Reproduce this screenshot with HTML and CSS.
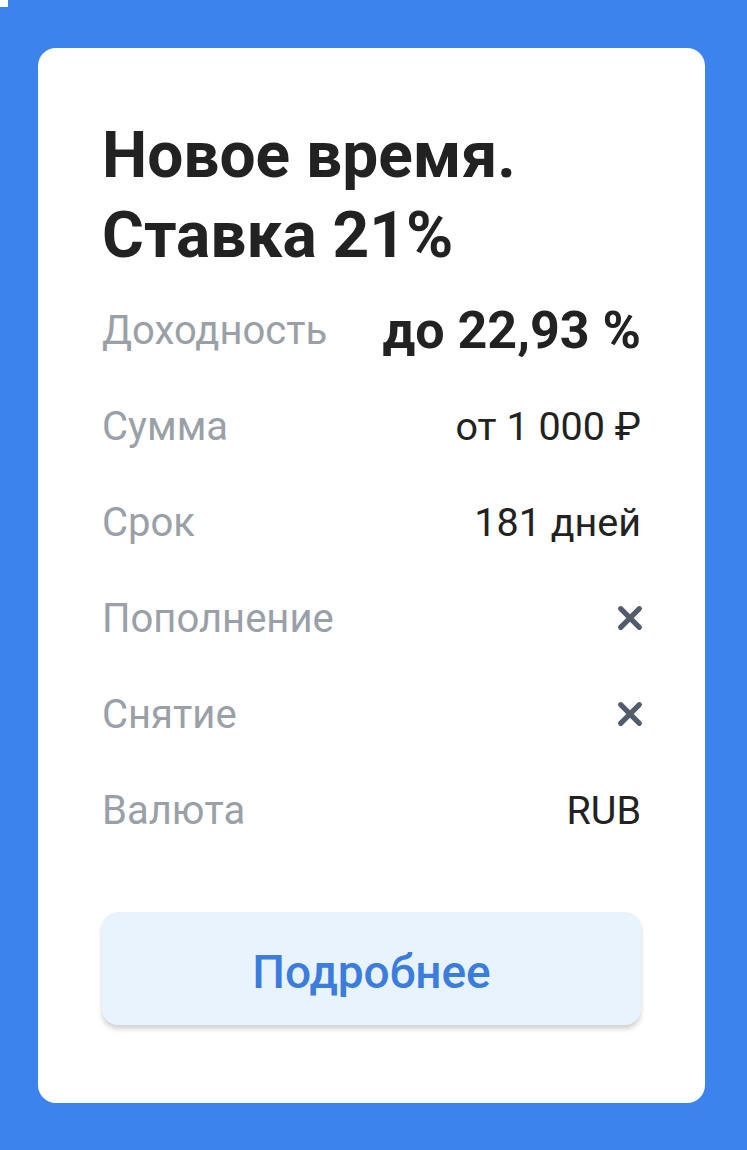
FILE: index.html
```html
<!DOCTYPE html>
<html lang="ru">
<head>
<meta charset="utf-8">
<link rel="stylesheet" href="styles.css">
</head>
<body>
<div class="corner"></div>
<div class="card">
  <h1 class="title">Новое время.<br>Ставка 21%</h1>
  <div class="rows">
    <div class="row"><span class="label">Доходность</span><span class="value big">до 22,93 %</span></div>
    <div class="row"><span class="label">Сумма</span><span class="value">от 1 000 ₽</span></div>
    <div class="row"><span class="label">Срок</span><span class="value">181 дней</span></div>
    <div class="row"><span class="label">Пополнение</span><span class="value"><svg class="cross" viewBox="0 0 24 24"><path d="M4 4L20 20M20 4L4 20"/></svg></span></div>
    <div class="row"><span class="label">Снятие</span><span class="value"><svg class="cross" viewBox="0 0 24 24"><path d="M4 4L20 20M20 4L4 20"/></svg></span></div>
    <div class="row"><span class="label">Валюта</span><span class="value">RUB</span></div>
  </div>
  <button class="more">Подробнее</button>
</div>
</body>
</html>
```
FILE: styles.css
```css
html, body {
  margin: 0;
  padding: 0;
}
body {
  background: #3d83ee;
  width: 747px;
  height: 1150px;
  font-family: Roboto, "Liberation Sans", sans-serif;
  overflow: hidden;
}
.corner {
  width: 8px;
  height: 7px;
  background: #ffffff;
}
.card {
  margin: 41px 0 0 38px;
  width: 667px;
  height: 1055px;
  box-sizing: border-box;
  background: #ffffff;
  border-radius: 18px;
  padding: 68px 64px 0 64px;
  display: flex;
  flex-direction: column;
}
.title {
  margin: 0;
  font-size: 64px;
  line-height: 80px;
  font-weight: 700;
  color: #222222;
  letter-spacing: 0;
}
.rows {
  margin-top: 6px;
  display: flex;
  flex-direction: column;
}
.row {
  height: 96px;
  display: flex;
  align-items: center;
  justify-content: space-between;
}
.label {
  font-size: 40px;
  color: #9aa0a8;
}
.value {
  font-size: 39.5px;
  color: #222222;
  display: flex;
  align-items: center;
}
.value.big {
  font-size: 52px;
  font-weight: 700;
}
.cross {
  width: 28px;
  height: 28px;
  margin-right: -3px;
  fill: none;
  stroke: #525c6b;
  stroke-width: 4.5;
  stroke-linecap: round;
}
.more {
  margin-top: 54px;
  height: 113px;
  width: 100%;
  border: none;
  border-radius: 16px;
  background: #e9f3fe;
  box-shadow: 0 4px 5px rgba(0, 0, 0, 0.18);
  font-family: Roboto, "Liberation Sans", sans-serif;
  font-size: 46px;
  font-weight: 500;
  color: #3b7ddd;
  padding: 6px 0 0 0;
}
```
